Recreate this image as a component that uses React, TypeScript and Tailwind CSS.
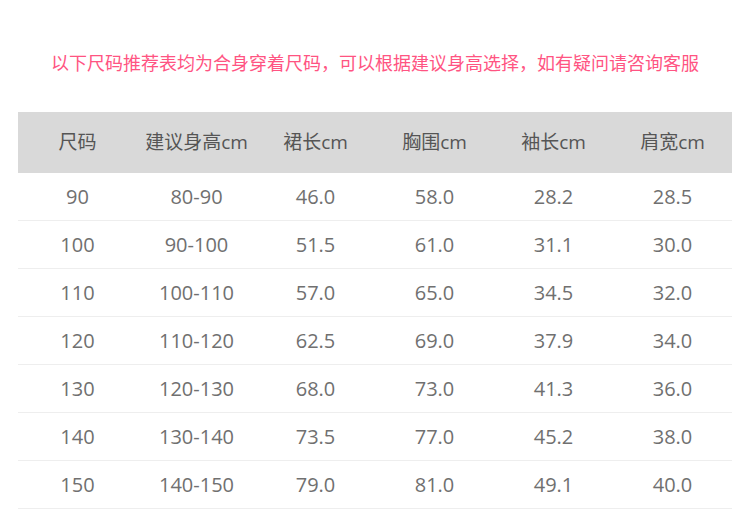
import React from 'react';

const headers = ['尺码', '建议身高cm', '裙长cm', '胸围cm', '袖长cm', '肩宽cm'];

const rows = [
  ['90', '80-90', '46.0', '58.0', '28.2', '28.5'],
  ['100', '90-100', '51.5', '61.0', '31.1', '30.0'],
  ['110', '100-110', '57.0', '65.0', '34.5', '32.0'],
  ['120', '110-120', '62.5', '69.0', '37.9', '34.0'],
  ['130', '120-130', '68.0', '73.0', '41.3', '36.0'],
  ['140', '130-140', '73.5', '77.0', '45.2', '38.0'],
  ['150', '140-150', '79.0', '81.0', '49.1', '40.0'],
];

const SizeChart = () => {
  return (
    <div className="w-[750px] h-[510px] bg-white overflow-hidden font-['Open_Sans','Noto_Sans_CJK_SC',sans-serif]">
      {/* Notice */}
      <div className="h-[112px] flex items-start justify-center pt-[50px]">
        <p className="text-[18px] leading-[26px] text-[#ff5482]">
          以下尺码推荐表均为合身穿着尺码，可以根据建议身高选择，如有疑问请咨询客服
        </p>
      </div>

      {/* Table */}
      <div className="mx-[18px] w-[714px]">
        <div className="grid grid-cols-6 h-[61px] bg-[#d9d9d9] items-center">
          {headers.map((h) => (
            <div key={h} className="text-center text-[19px] text-[#555]">
              {h}
            </div>
          ))}
        </div>
        {rows.map((r) => (
          <div key={r[0]} className="grid grid-cols-6 h-[48px] items-center border-b border-[#eeeeee]">
            {r.map((c, i) => (
              <div key={i} className="text-center text-[20px] text-[#707070]">
                {c}
              </div>
            ))}
          </div>
        ))}
      </div>
    </div>
  );
};

export default SizeChart;
